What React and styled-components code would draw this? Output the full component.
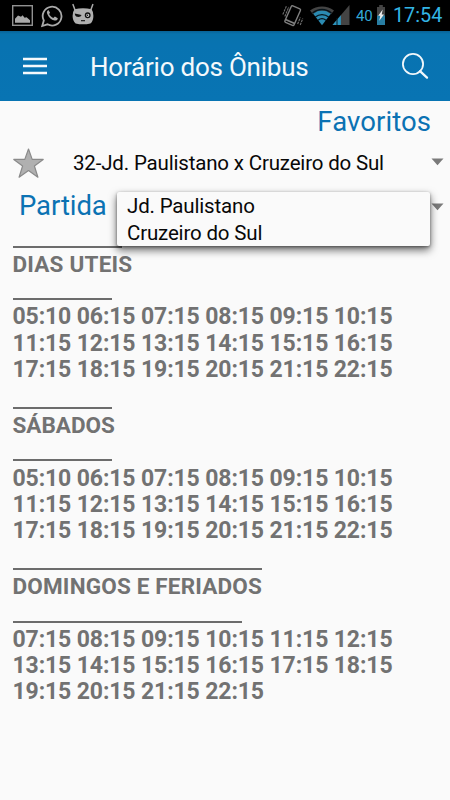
import React from "react";
import styled, { createGlobalStyle } from "styled-components";

const Global = createGlobalStyle`
  * { box-sizing: border-box; }
  html, body { margin: 0; padding: 0; background: #fafafa; }
  body { font-family: Roboto, "Noto Sans", sans-serif; overflow: hidden; }
  svg { display: block; flex: none; }
`;

const Screen = styled.div`
  width: 450px;
  height: 800px;
  background: #fafafa;
  overflow: hidden;
`;

const StatusBar = styled.div`
  height: 31px;
  background: #000;
  display: flex;
  justify-content: space-between;
  padding: 0 8px 0 11px;
`;

const StatusGroup = styled.div`
  display: flex;
  align-items: flex-start;
`;

const LeftStatus = styled(StatusGroup)`
  gap: 8px;
`;

const WifiSlot = styled.div`
  margin: 0 -3px 0 5px;
`;

const Battery = styled.span`
  width: 17px;
  margin: 0 4px 0 6px;
  font-size: 15px;
  line-height: 32px;
  letter-spacing: -0.2px;
  color: #33a7d5;
  white-space: nowrap;
`;

const Clock = styled.span`
  width: 49px;
  margin-left: 8px;
  font-size: 19.8px;
  line-height: 32px;
  color: #33b5e5;
  white-space: nowrap;
`;

const AppBar = styled.header`
  height: 70px;
  display: flex;
  align-items: center;
  padding: 0 21px 0 23px;
  background: linear-gradient(#086296 0, #0873ad 3px, #0873b1 14px, #0874b3 100%);
`;

const Title = styled.h1`
  flex: 1;
  margin: 2px 0 0 43px;
  font-size: 26px;
  font-weight: 400;
  line-height: 34px;
  letter-spacing: -0.22px;
  color: #f4f9fc;
`;

const Favorites = styled.div`
  height: 40px;
  padding-right: 19px;
  text-align: right;
  font-size: 27.5px;
  line-height: 41px;
  letter-spacing: 0.08px;
  color: #0b72b3;
`;

const LineRow = styled.div`
  height: 44px;
  display: flex;
  align-items: center;
  padding: 0 6px 0 12px;
`;

const LineName = styled.span`
  flex: 1;
  margin-left: 28px;
  font-size: 20.5px;
  line-height: 42px;
  letter-spacing: -0.17px;
  color: #080808;
  white-space: nowrap;
`;

const DepartureRow = styled.div`
  position: relative;
  height: 60px;
  display: flex;
  align-items: flex-start;
  justify-content: space-between;
  padding: 0 6px 0 19px;
`;

const DepartureLabel = styled.span`
  font-size: 27.5px;
  line-height: 41px;
  letter-spacing: -0.08px;
  color: #0b72b3;
`;

const Caret = styled.svg`
  margin-top: ${(p) => p.$top}px;
`;

const Menu = styled.ul`
  position: absolute;
  z-index: 1;
  left: 117px;
  top: 7px;
  width: 313px;
  height: 54px;
  margin: 0;
  padding: 1px 10px 0;
  list-style: none;
  background: #fafafa;
  border-radius: 2px;
  box-shadow: 0 4px 8px rgba(0, 0, 0, 0.6), 0 1px 3px rgba(0, 0, 0, 0.38);
`;

const MenuItem = styled.li`
  font-size: 20.5px;
  line-height: 27px;
  letter-spacing: -0.17px;
  color: #080808;
`;

const Schedule = styled.main`
  padding: 0.5px 0 0 12.5px;
  font-weight: 700;
  font-size: 23px;
  line-height: 26.3px;
  color: #727272;
`;

const Section = styled.section`
  height: 161.2px;
`;

const Rule = styled.div`
  width: ${(p) => p.$width - 0.5}px;
  height: 2px;
  background: #6c6c6c;
`;

const SectionTitle = styled.h2`
  height: 50.7px;
  margin: 0;
  padding-top: 3.3px;
  font-size: 22.5px;
  font-weight: 700;
  line-height: 26.3px;
  letter-spacing: ${(p) => p.$tracking}px;
  white-space: nowrap;
`;

const Times = styled.div`
  padding-top: 4.3px;
`;

const TimeLine = styled.div`
  white-space: nowrap;
  letter-spacing: -0.12px;
`;

const PictureIcon = () => (
  <svg width="22" height="31" viewBox="0 0 22 31">
    <rect x="1.7" y="5.7" width="19.6" height="19.6" fill="none" stroke="#919191" strokeWidth="1.4" />
    <path d="M4 22.8v-4l3-3.2 3 1.2 1.6-1.5 2 2.5 2-.5 3.4 3v2.5z" fill="#aaa" />
  </svg>
);

const WhatsappIcon = () => (
  <svg width="22" height="31" viewBox="0 0 22 31">
    <path d="M1.2 26l1.6-5.5A9.4 9.4 0 1 1 6.5 24.3z" fill="none" stroke="#aaa" strokeWidth="1.8" />
    <path d="M7.4 9.9c-1.4.8-1.8 2.2-1.2 3.8 1.3 3.5 4 6 7.3 6.8 1.8.3 3.2-.8 3.3-2.3l-2.9-1.7-1.6 1.5c-2-.7-3.4-2.2-4.2-3.9l1-1.3z" fill="#aaa" />
  </svg>
);

const CyanogenIcon = () => (
  <svg width="24" height="31" viewBox="0 0 24 31">
    <path d="M4 10L2 4.6M19.8 10l2-5.4" stroke="#aaa" strokeWidth="1.5" strokeLinecap="round" />
    <path d="M3.5 9.2Q12 7.1 20.6 9.2q1.8 2.5 1.8 6.5 0 5.5-3 7.7-7.4 1.8-14.8 0-3-2.5-3-7.7 0-4 1.9-6.5z" fill="#b0b0b0" />
    <path d="M3.8 13.4l6.8 1.6a3.4 2.5 0 0 1-6.6 0z" fill="#111" />
    <circle cx="16.7" cy="15.3" r="2.3" fill="#ccc" stroke="#111" strokeWidth="1.3" />
    <circle cx="16.4" cy="15.3" r=".8" fill="#111" />
    <path d="M10 20.7h4" stroke="#111" strokeWidth="1.1" />
  </svg>
);

const VibrateIcon = () => (
  <svg width="22" height="31" viewBox="0 0 22 31">
    <g transform="rotate(24 10.5 15.8)" fill="none" stroke="#808080">
      <rect x="5.6" y="6.6" width="10" height="18" rx="1.2" strokeWidth="1.4" />
      <path d="M5.6 22h10" strokeWidth="1.8" />
    </g>
    <path d="M.8 14.5L4.5 6M2.8 16.5L6.8 7M15.6 24l2.8-6.5M18.2 25l2.6-6.5" stroke="#707070" strokeWidth="1.1" strokeDasharray="2.5 .7" />
  </svg>
);

const WifiIcon = () => (
  <svg width="26" height="31" viewBox="0 0 26 31">
    <path d="M1 10.5C8 5 18 5 25 10.5l-3 3.8C16 9.6 10 9.6 4 14.3z" fill="#444" />
    <path d="M4.2 13.8c5.3-4.5 12.3-4.5 17.6 0L13 25.2z" fill="#2b8bb2" />
    <path d="M3.5 13.1c5.8-4.8 13.2-4.8 19 0M6.3 17c4-3.2 9.4-3.2 13.4 0M9 20.3c2.5-2 5.5-2 8 0" fill="none" stroke="#07141b" strokeWidth="1.3" />
  </svg>
);

const SignalIcon = () => (
  <svg width="18" height="31" viewBox="0 0 18 31">
    <path d="M.5 25L17.5 5v20z" fill="#444" />
    <path d="M.5 25l8.4-9.8V25z" fill="#2b93bd" />
    <path d="M5 18v7" stroke="#0a1c25" strokeWidth="1" />
  </svg>
);

const BatteryIcon = () => (
  <svg width="8" height="31" viewBox="0 0 8 31">
    <path d="M2.2 5h3.6v2H8v9H0V7h2.2z" fill="#444" />
    <path d="M0 15.5h8V25H0z" fill="#287ea3" />
    <path d="M5.7 9.5L1.2 15.8h2.1l-1 5L7 14.6H4.7z" fill="#eee" />
  </svg>
);

const MenuIcon = () => (
  <svg width="24" height="18" viewBox="0 0 24 18">
    <path d="M0 2h24M0 9h24M0 16h24" stroke="#f5f9fc" strokeWidth="2.6" />
  </svg>
);

const SearchIcon = () => (
  <svg width="28" height="28" viewBox="0 0 28 28">
    <circle cx="12" cy="12" r="10.1" fill="none" stroke="#f1f7fb" strokeWidth="1.8" />
    <path d="M19 19.2l7 6.4" stroke="#f1f7fb" strokeWidth="2.3" strokeLinecap="round" />
  </svg>
);

const StarIcon = () => (
  <svg width="33" height="32" viewBox="0 0 33 32">
    <path d="M16.5 2l3.7 10.4h11L22.4 19l3.5 11.2-9.4-6.6-9.4 6.6L10.6 19l-8.8-6.6h11z" fill="#b0b0b0" stroke="#8a8a8a" strokeWidth="1.2" strokeLinejoin="round" />
  </svg>
);

const DropCaret = ({ top }) => (
  <Caret $top={top} width="13" height="8" viewBox="0 0 13 8">
    <path d="M.5.5h12l-6 6.8z" fill="#7a7a7a" />
  </Caret>
);

const weekday = [
  "05:10 06:15 07:15 08:15 09:15 10:15",
  "11:15 12:15 13:15 14:15 15:15 16:15",
  "17:15 18:15 19:15 20:15 21:15 22:15",
];

const sections = [
  { title: "DIAS UTEIS", top: 110, bottom: 100, tracking: 0.2, times: weekday },
  { title: "SÁBADOS", top: 100, bottom: 100, tracking: 0, times: weekday },
  {
    title: "DOMINGOS E FERIADOS",
    top: 250,
    bottom: 230,
    tracking: 0.18,
    times: [
      "07:15 08:15 09:15 10:15 11:15 12:15",
      "13:15 14:15 15:15 16:15 17:15 18:15",
      "19:15 20:15 21:15 22:15",
    ],
  },
];

export default function App() {
  return (
    <>
      <Global />
      <Screen>
        <StatusBar>
          <LeftStatus>
            <PictureIcon />
            <WhatsappIcon />
            <CyanogenIcon />
          </LeftStatus>
          <StatusGroup>
            <VibrateIcon />
            <WifiSlot>
              <WifiIcon />
            </WifiSlot>
            <SignalIcon />
            <Battery>40</Battery>
            <BatteryIcon />
            <Clock>17:54</Clock>
          </StatusGroup>
        </StatusBar>
        <AppBar>
          <MenuIcon />
          <Title>Horário dos Ônibus</Title>
          <SearchIcon />
        </AppBar>
        <Favorites>Favoritos</Favorites>
        <LineRow>
          <StarIcon />
          <LineName>32-Jd. Paulistano x Cruzeiro do Sul</LineName>
          <DropCaret top={-3} />
        </LineRow>
        <DepartureRow>
          <DepartureLabel>Partida</DepartureLabel>
          <DropCaret top={18} />
          <Menu>
            <MenuItem>Jd. Paulistano</MenuItem>
            <MenuItem>Cruzeiro do Sul</MenuItem>
          </Menu>
        </DepartureRow>
        <Schedule>
          {sections.map((s) => (
            <Section key={s.title}>
              <Rule $width={s.top} />
              <SectionTitle $tracking={s.tracking}>{s.title}</SectionTitle>
              <Rule $width={s.bottom} />
              <Times>
                {s.times.map((t) => (
                  <TimeLine key={t}>{t}</TimeLine>
                ))}
              </Times>
            </Section>
          ))}
        </Schedule>
      </Screen>
    </>
  );
}
